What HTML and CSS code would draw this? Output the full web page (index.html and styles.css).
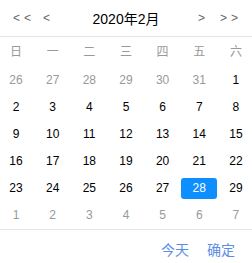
FILE: index.html
```html
<!DOCTYPE html>
<html lang="zh-CN">
<head>
  <meta charset="UTF-8">
  <meta name="viewport" content="width=device-width, initial-scale=1">
  <title>日期选择</title>
  <link rel="stylesheet" href="styles.css">
</head>
<body>
  <div class="picker">
    <div class="picker-header">
      <span class="nav-btn nav-first">&lt;&lt;</span>
      <span class="nav-btn nav-prev">&lt;</span>
      <span class="picker-title">2020年2月</span>
      <span class="nav-btn nav-next">&gt;</span>
      <span class="nav-btn nav-last">&gt;&gt;</span>
    </div>

    <div class="week-row">
      <span>日</span><span>一</span><span>二</span><span>三</span><span>四</span><span>五</span><span>六</span>
    </div>

    <div class="days">
      <span class="day other">26</span><span class="day other">27</span><span class="day other">28</span><span class="day other">29</span><span class="day other">30</span><span class="day other">31</span><span class="day">1</span>
      <span class="day">2</span><span class="day">3</span><span class="day">4</span><span class="day">5</span><span class="day">6</span><span class="day">7</span><span class="day">8</span>
      <span class="day">9</span><span class="day">10</span><span class="day">11</span><span class="day">12</span><span class="day">13</span><span class="day">14</span><span class="day">15</span>
      <span class="day">16</span><span class="day">17</span><span class="day">18</span><span class="day">19</span><span class="day">20</span><span class="day">21</span><span class="day">22</span>
      <span class="day">23</span><span class="day">24</span><span class="day">25</span><span class="day">26</span><span class="day">27</span><span class="day selected">28</span><span class="day">29</span>
      <span class="day other">1</span><span class="day other">2</span><span class="day other">3</span><span class="day other">4</span><span class="day other">5</span><span class="day other">6</span><span class="day other">7</span>
    </div>

    <div class="picker-footer">
      <span class="footer-btn">今天</span>
      <span class="footer-btn">确定</span>
    </div>
  </div>
</body>
</html>
```

FILE: styles.css
```css
body {
  margin: 0;
  padding: 0;
  background: #fff;
  font-family: "Liberation Sans", "Noto Sans CJK SC", sans-serif;
}

.picker {
  width: 252px;
}

.picker-header {
  display: flex;
  align-items: center;
  height: 36px;
  border-bottom: 1px solid #e4e4e8;
}

.nav-btn {
  font-size: 12px;
  color: #666;
  letter-spacing: 4px;
  cursor: pointer;
}

.nav-first {
  margin-left: 13px;
}

.nav-prev {
  margin-left: 8px;
}

.nav-last {
  margin-left: 11px;
  margin-right: 10px;
}

.picker-title {
  flex: 1;
  text-align: center;
  font-size: 14px;
  color: #000;
}

.week-row, .days {
  display: grid;
  grid-template-columns: repeat(7, 30px);
  column-gap: 6.67px;
  padding: 0 1px;
}

.week-row span {
  height: 30px;
  line-height: 30px;
  text-align: center;
  font-size: 12px;
  color: #999;
}

.day {
  height: 27px;
  line-height: 27px;
  text-align: center;
  font-size: 12px;
  color: #000;
  cursor: pointer;
}

.day.other {
  color: #999;
}

.day.selected {
  margin: 3px -3px;
  height: 21px;
  line-height: 21px;
  border-radius: 3px;
  background: #0f8fff;
  color: #fff;
}

.picker-footer {
  display: flex;
  justify-content: flex-end;
  gap: 18px;
  padding: 12px 17px 0 0;
  border-top: 1px solid #e4e4e4;
}

.footer-btn {
  font-size: 14px;
  line-height: 16px;
  color: #5b8ce6;
  cursor: pointer;
}
```
